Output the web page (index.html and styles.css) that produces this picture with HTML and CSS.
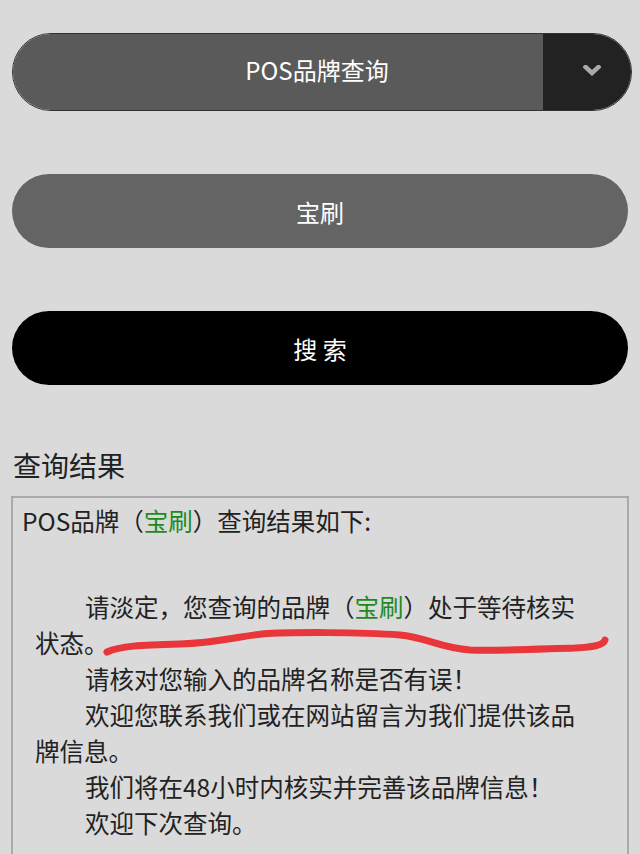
FILE: index.html
```html
<!DOCTYPE html>
<html lang="zh-CN">
<head>
<meta charset="utf-8">
<title>POS品牌查询</title>
<link rel="stylesheet" href="styles.css">
</head>
<body>
<div class="page">
  <div class="select">
    <div class="select-value">POS品牌查询</div>
    <div class="select-arrow">
      <svg width="18" height="11" viewBox="0 0 18 11"><path d="M2.5 2 L9 8 L15.5 2" fill="none" stroke="#a9a9a9" stroke-width="4.5" stroke-linecap="square"/></svg>
    </div>
  </div>
  <div class="input">宝刷</div>
  <div class="button">搜&nbsp;索</div>
  <div class="heading">查询结果</div>
  <div class="result">
    <div class="result-title">POS品牌（<span class="green">宝刷</span>）查询结果如下:</div>
    <div class="result-body">
      <p>请淡定，您查询的品牌（<span class="green">宝刷</span>）处于等待核实状态。</p>
      <p>请核对您输入的品牌名称是否有误！</p>
      <p>欢迎您联系我们或在网站留言为我们提供该品牌信息。</p>
      <p>我们将在48小时内核实并完善该品牌信息！</p>
      <p>欢迎下次查询。</p>
    </div>
  </div>
</div>
<svg class="scribble" width="640" height="854" viewBox="0 0 640 854">
  <path d="M107 652 C120 646 140 645 180 644 C215 643 235 637 262 634 C290 632 360 632 400 635 C425 637 440 648 470 650 C500 651 540 649 575 648 C592 647 603 646 605 640" fill="none" stroke="#e8363a" stroke-width="7" stroke-linecap="round" stroke-linejoin="round"/>
</svg>
</body>
</html>
```
FILE: styles.css
```css
html, body {
  margin: 0;
  padding: 0;
  background: #dadada;
  overflow: hidden;
}
body {
  width: 640px;
  height: 854px;
  position: relative;
  font-family: "Noto Sans CJK SC", "Noto Sans", sans-serif;
}
.page {
  padding: 33px 0 0 12px;
}
.select {
  width: 620px;
  height: 78px;
  box-sizing: border-box;
  border: 1.5px solid #333;
  border-radius: 39px;
  overflow: hidden;
  display: flex;
}
.select-value {
  flex: 1;
  background: #5a5a5a;
  color: #fff;
  font-size: 24px;
  display: flex;
  align-items: center;
  justify-content: center;
  padding-left: 78px;
  padding-bottom: 5px;
}
.select-arrow {
  width: 88px;
  background: #222;
  display: flex;
  align-items: center;
  justify-content: center;
  padding-left: 10px;
  padding-bottom: 4px;
  box-sizing: border-box;
}
.input, .button {
  width: 616px;
  height: 74px;
  border-radius: 37px;
  color: #fff;
  font-size: 24px;
  display: flex;
  align-items: center;
  justify-content: center;
  margin-top: 63px;
}
.input {
  background: #646464;
}
.button {
  background: #000;
}
.heading {
  margin-top: 60px;
  height: 40px;
  line-height: 40px;
  font-size: 28px;
  color: #222;
  padding-left: 1px;
}
.result {
  margin-top: 11px;
  margin-left: -1px;
  width: 618px;
  height: 358px;
  box-sizing: border-box;
  border: 2px solid #aaa;
  border-bottom: 0;
  padding: 5px 20px 0 9px;
  color: #222;
  font-size: 24.5px;
  line-height: 36px;
  overflow: hidden;
}
.green {
  color: #1e8a1e;
}
.result-body {
  margin-top: 50px;
  padding-left: 13px;
  width: 550px;
}
.result-body p {
  margin: 0;
  text-indent: 50px;
}
.scribble {
  position: absolute;
  top: 0;
  left: 0;
  pointer-events: none;
}
```
